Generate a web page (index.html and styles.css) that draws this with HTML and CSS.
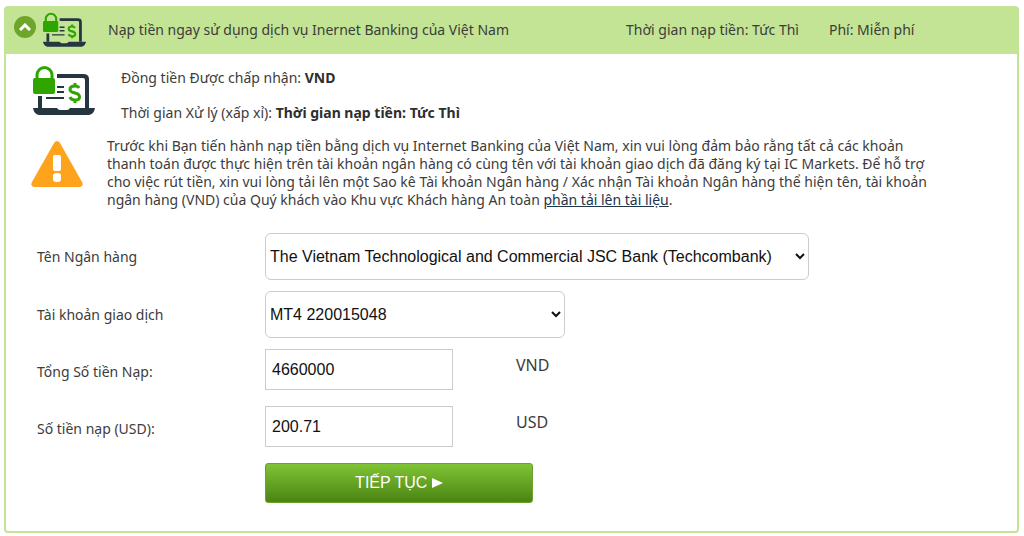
FILE: index.html
```html
<!DOCTYPE html>
<html lang="vi">
<head>
<meta charset="UTF-8">
<meta name="viewport" content="width=device-width, initial-scale=1.0">
<title>Nạp tiền - Internet Banking</title>
<link rel="stylesheet" href="styles.css">
</head>
<body>
<svg class="sprite" width="0" height="0" aria-hidden="true">
  <symbol id="bank-icon" viewBox="0 0 62 50">
    <path d="M24 8H50Q56 8 56 13V42H52V14Q52 12 50 12H24Z" fill="#263640"/>
    <path d="M5 30H9V42H5Z" fill="#263640"/>
    <path d="M0 42H24Q25 44 27 44H34Q36 44 37 42H62Q61 48 56 49H6Q1 48 0 42Z" fill="#263640"/>
    <path d="M24 21H31M24 26H31M13 32H31" stroke="#263640" stroke-width="2"/>
    <path d="M4 14V9a7.500 7.500 0 0 1 15 0V14" fill="none" stroke="#2fa500" stroke-width="3"/>
    <rect x="0" y="12" width="22" height="16" rx="2" fill="#2fa500"/>
    <path d="M46 22Q45 20 42 20Q37 20 37 23.500Q37 26 42 27Q46.500 28 46.500 31Q46.500 34 42 34Q38 34 37 31M42 17V20M42 34V37" fill="none" stroke="#2fa500" stroke-width="3"/>
  </symbol>
</svg>

<div class="panel">
  <div class="panel-header">
    <button class="toggle" type="button" aria-label="Thu gọn">
      <svg width="12" height="8" viewBox="0 0 12 8"><path d="M1 7L6 2L11 7" fill="none" stroke="#fff" stroke-width="3"/></svg>
    </button>
    <svg class="icon-small" width="43" height="36"><use href="#bank-icon"/></svg>
    <span class="title">Nạp tiền ngay sử dụng dịch vụ Inernet Banking của Việt Nam</span>
    <span class="time">Thời gian nạp tiền: Tức Thì</span>
    <span>Phí: Miễn phí</span>
  </div>

  <div class="panel-body">
    <div class="summary">
      <svg width="62" height="50"><use href="#bank-icon"/></svg>
      <div class="details">
        <p>Đồng tiền Được chấp nhận: <b>VND</b></p>
        <p>Thời gian Xử lý (xấp xỉ): <b>Thời gian nạp tiền: Tức Thì</b></p>
      </div>
    </div>

    <div class="notice">
      <svg width="54" height="48" viewBox="0 0 54 48">
        <path d="M24 3Q27 -1 30 3L52 42Q54 46 50 47H4Q0 46 2 42Z" fill="#fda31c"/>
        <rect x="23" y="15" width="8" height="16" rx="2" fill="#fff"/>
        <rect x="23" y="33" width="8" height="9" rx="3" fill="#fff"/>
      </svg>
      <p>Trước khi Bạn tiến hành nạp tiền bằng dịch vụ Internet Banking của Việt Nam, xin vui lòng đảm bảo rằng tất cả các khoản<br>
      thanh toán được thực hiện trên tài khoản ngân hàng có cùng tên với tài khoản giao dịch đã đăng ký tại IC Markets. Để hỗ trợ<br>
      cho việc rút tiền, xin vui lòng tải lên một Sao kê Tài khoản Ngân hàng / Xác nhận Tài khoản Ngân hàng thể hiện tên, tài khoản<br>
      ngân hàng (VND) của Quý khách vào Khu vực Khách hàng An toàn <a href="#">phần tải lên tài liệu</a>.</p>
    </div>

    <form class="deposit-form">
      <div class="row">
        <label for="bank">Tên Ngân hàng</label>
        <select id="bank" class="bank">
          <option>The Vietnam Technological and Commercial JSC Bank (Techcombank)</option>
        </select>
      </div>
      <div class="row">
        <label for="account">Tài khoản giao dịch</label>
        <select id="account" class="account">
          <option>MT4 220015048</option>
        </select>
      </div>
      <div class="row amount">
        <label for="amountVnd">Tổng Số tiền Nạp:</label>
        <input id="amountVnd" type="text" value="4660000">
        <span class="currency">VND</span>
      </div>
      <div class="row amount">
        <label for="amountUsd">Số tiền nạp (USD):</label>
        <input id="amountUsd" type="text" value="200.71">
        <span class="currency">USD</span>
      </div>
      <button class="submit" type="submit">TIẾP TỤC <svg width="11" height="10" viewBox="0 0 11 10"><path d="M0 0L11 5L0 10Z" fill="#fff"/></svg></button>
    </form>
  </div>
</div>
</body>
</html>
```

FILE: styles.css
```css
* {
  box-sizing: border-box;
}
body {
  margin: 6px 5px 4px 4px;
  background-color: #fff;
  color: #3c3c3c;
  font-family: "Noto Sans", sans-serif;
  font-size: 14px;
}
p {
  margin: 0;
}
.sprite {
  display: block;
}
.panel {
  border: 2px solid #c3e494;
  border-radius: 4px;
}
.panel-header {
  display: flex;
  align-items: center;
  height: 46px;
  padding: 0 8px 3px;
  background-color: #c3e494;
}
.toggle {
  display: flex;
  align-items: center;
  justify-content: center;
  width: 22px;
  height: 22px;
  margin-bottom: 6px;
  padding: 0;
  border: 0;
  border-radius: 50%;
  background-color: #6ea52b;
}
.icon-small {
  margin-left: 7px;
}
.title {
  width: 518px;
  margin-left: 22px;
}
.time {
  margin-right: 30px;
}
.panel-body {
  padding: 12px 24px 28px;
}
.summary {
  display: flex;
  padding-left: 3px;
}
.details {
  margin-left: 26px;
  line-height: 24px;
}
.details p + p {
  margin-top: 11px;
}
.details b {
  color: #2e2e2e;
}
.notice {
  display: flex;
  align-items: center;
  gap: 23px;
  margin-top: 12px;
  line-height: 18px;
  white-space: nowrap;
}
.notice svg {
  margin-bottom: 18px;
}
.notice a {
  color: #22364a;
}
.deposit-form {
  margin-top: 24px;
  padding-left: 7px;
}
.row {
  display: flex;
  align-items: center;
  margin-bottom: 11px;
}
.row label {
  width: 228px;
}
select,
input {
  color: #111;
  background-color: #fff;
  font-family: "Liberation Sans", Arial, sans-serif;
  font-size: 16px;
}
select {
  height: 47px;
  border: 1px solid #ccc;
  border-radius: 6px;
}
.bank {
  width: 544px;
}
.account {
  width: 300px;
}
input {
  width: 188px;
  height: 41px;
  padding: 0 6px;
  border: 1px solid #ccc;
}
.amount {
  margin-bottom: 16px;
}
.amount label {
  padding-top: 4px;
}
.currency {
  margin-left: 63px;
  padding-bottom: 10px;
  font-size: 16px;
}
.submit {
  display: block;
  width: 268px;
  height: 40px;
  margin-left: 228px;
  border: 1px solid #6da12e;
  border-radius: 3px;
  background: linear-gradient(#80c436, #4a8412);
  color: #fff;
  font-family: "Liberation Sans", Arial, sans-serif;
  font-size: 16px;
}
```
